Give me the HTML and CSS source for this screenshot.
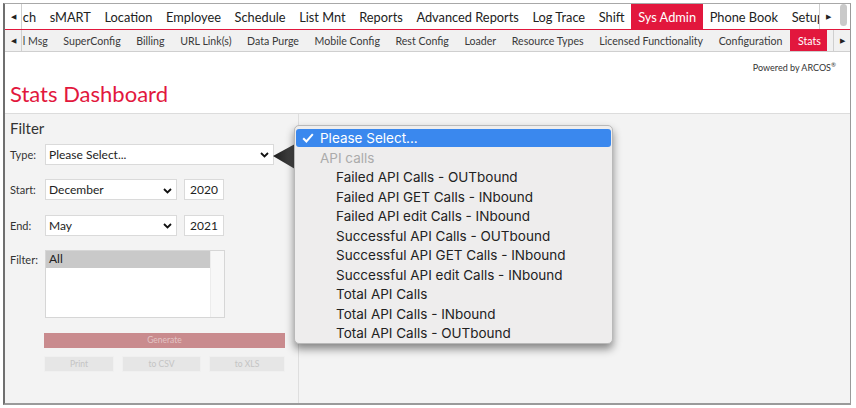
FILE: index.html
```html
<!DOCTYPE html>
<html lang="en">
<head>
    <meta charset="UTF-8">
    <title>Stats Dashboard</title>
    <link rel="stylesheet" href="styles.css">
</head>
<body>

<div class="frame">
    <div class="menu menu-main">
        <span class="arrow arrow-left">&#9664;</span>
        <div class="menu-scroll">
            <div class="menu-items main-items">
                <span class="item">ch</span>
                <span class="item">sMART</span>
                <span class="item">Location</span>
                <span class="item">Employee</span>
                <span class="item">Schedule</span>
                <span class="item">List Mnt</span>
                <span class="item">Reports</span>
                <span class="item">Advanced Reports</span>
                <span class="item">Log Trace</span>
                <span class="item">Shift</span>
                <span class="item active">Sys Admin</span>
                <span class="item">Phone Book</span>
                <span class="item">Setup</span>
            </div>
        </div>
        <span class="arrow arrow-right">&#9654;</span>
        <span class="thumb-track"><span class="thumb"></span></span>
    </div>

    <div class="menu menu-sub">
        <span class="arrow arrow-left">&#9664;</span>
        <div class="menu-scroll">
            <div class="menu-items sub-items">
                <span class="item">l Msg</span>
                <span class="item">SuperConfig</span>
                <span class="item">Billing</span>
                <span class="item">URL Link(s)</span>
                <span class="item">Data Purge</span>
                <span class="item">Mobile Config</span>
                <span class="item">Rest Config</span>
                <span class="item">Loader</span>
                <span class="item">Resource Types</span>
                <span class="item">Licensed Functionality</span>
                <span class="item">Configuration</span>
                <span class="item active">Stats</span>
            </div>
        </div>
        <span class="arrow arrow-right">&#9654;</span>
    </div>

    <div class="page-head">
        <div class="powered">Powered by ARCOS<sup>&reg;</sup></div>
        <h1>Stats Dashboard</h1>
    </div>

    <div class="content">
        <div class="filter-panel">
            <h2>Filter</h2>
            <div class="form-row">
                <label>Type:</label>
                <div class="select select-type">
                    <span>Please Select...</span>
                    <svg class="chev" width="9" height="6" viewBox="0 0 9 6"><path d="M1 1l3.5 3.5L8 1" fill="none" stroke="#111" stroke-width="1.8"/></svg>
                </div>
            </div>
            <div class="form-row">
                <label>Start:</label>
                <div class="select select-month">
                    <span>December</span>
                    <svg class="chev" width="9" height="6" viewBox="0 0 9 6"><path d="M1 1l3.5 3.5L8 1" fill="none" stroke="#111" stroke-width="1.8"/></svg>
                </div>
                <div class="year">2020</div>
            </div>
            <div class="form-row">
                <label>End:</label>
                <div class="select select-month">
                    <span>May</span>
                    <svg class="chev" width="9" height="6" viewBox="0 0 9 6"><path d="M1 1l3.5 3.5L8 1" fill="none" stroke="#111" stroke-width="1.8"/></svg>
                </div>
                <div class="year">2021</div>
            </div>
            <div class="form-row list-row">
                <label>Filter:</label>
                <div class="listbox">
                    <div class="list-options">
                        <div class="list-option selected">All</div>
                    </div>
                    <div class="list-scroll"></div>
                </div>
            </div>
            <div class="actions">
                <div class="btn btn-generate">Generate</div>
                <div class="btn-row">
                    <div class="btn btn-print">Print</div>
                    <div class="btn btn-csv">to CSV</div>
                    <div class="btn btn-xls">to XLS</div>
                </div>
            </div>
        </div>
        <div class="result-panel"></div>
    </div>

    <svg class="pointer" width="24" height="34" viewBox="0 0 24 34">
        <defs>
            <linearGradient id="pg" x1="0" y1="0" x2="1" y2="0">
                <stop offset="0" stop-color="#1c1c1c"/>
                <stop offset="1" stop-color="#4a4a4a"/>
            </linearGradient>
        </defs>
        <polygon points="1,17 23,5 23,30" fill="url(#pg)"/>
    </svg>

    <div class="popup">
        <div class="opt current">
            <svg class="check" width="12" height="10" viewBox="0 0 12 10"><path d="M1.2 5.2l3.2 3.3L10.8 1.2" fill="none" stroke="#fff" stroke-width="2"/></svg>
            Please Select...
        </div>
        <div class="opt group">API calls</div>
        <div class="opt sub">Failed API Calls - OUTbound</div>
        <div class="opt sub">Failed API GET Calls - INbound</div>
        <div class="opt sub">Failed API edit Calls - INbound</div>
        <div class="opt sub">Successful API Calls - OUTbound</div>
        <div class="opt sub">Successful API GET Calls - INbound</div>
        <div class="opt sub">Successful API edit Calls - INbound</div>
        <div class="opt sub">Total API Calls</div>
        <div class="opt sub">Total API Calls - INbound</div>
        <div class="opt sub">Total API Calls - OUTbound</div>
    </div>
</div>

</body>
</html>
```

FILE: styles.css
```css
body {
    margin: 0;
    padding: 3px 5px 3px 3px;
    background: #ffffff;
    font-family: "Lato", "Open Sans", sans-serif;
    color: #222;
}

.frame {
    position: relative;
    height: 399px;
    border-top: 1px solid #a8a8a8;
    border-left: 2px solid #6f6f6f;
    border-right: 1px solid #9a9a9a;
    border-bottom: 2px solid #9a9a9a;
    display: flex;
    flex-direction: column;
    overflow: hidden;
}

/* menus */
.menu {
    display: flex;
    align-items: stretch;
    flex: none;
}

.menu-main {
    height: 25px;
    border-bottom: 1px solid #e2173d;
    font-size: 12.8px;
    background: #fff;
}

.menu-sub {
    height: 21px;
    border-bottom: 1px solid #cfcfcf;
    font-size: 10.6px;
    background: #f1f1f1;
    color: #3a3a3a;
}

.arrow {
    flex: none;
    width: 16px;
    display: flex;
    align-items: center;
    justify-content: center;
    font-size: 7px;
    color: #222;
}

.arrow-left {
    border-right: 1px solid #cfcfcf;
}

.arrow-right {
    border-left: 1px solid #cfcfcf;
}

.menu-scroll {
    flex: 1;
    overflow: hidden;
}

.menu-items {
    display: flex;
    height: 100%;
    white-space: nowrap;
}

.main-items {
    margin-left: -6px;
}

.sub-items {
    margin-left: -7px;
}

.item {
    display: flex;
    align-items: center;
    padding: 0 6.8px;
}

.menu-sub .item {
    padding: 0 7.8px;
}

.item.active {
    background: #e2173d;
    color: #fff;
}

.menu-sub .arrow-right {
    width: 16px;
    margin-left: 6px;
}

.thumb-track {
    flex: none;
    width: 14px;
    display: flex;
    justify-content: center;
}

.thumb {
    width: 7px;
    height: 22px;
    border-radius: 4px;
    background: #c9c9c9;
}

/* header */
.page-head {
    flex: none;
    height: 61px;
    background: #fff;
    border-bottom: 1px solid #dcdcdc;
    padding: 0 14px 0 5px;
}

.powered {
    text-align: right;
    font-size: 9px;
    color: #333;
    margin-top: 9px;
}

.powered sup {
    font-size: 6px;
}

h1 {
    margin: 7px 0 0;
    font-size: 22px;
    font-weight: normal;
    color: #e2173d;
}

/* content */
.content {
    flex: 1;
    display: flex;
    background: #f3f3f3;
}

.filter-panel {
    width: 288px;
    border-right: 1px solid #dedede;
    padding-left: 5px;
    font-size: 11px;
    color: #333;
}

h2 {
    margin: 5px 0 6.5px;
    font-size: 15px;
    font-weight: normal;
    color: #333;
    line-height: 18px;
}

.form-row {
    display: flex;
    align-items: center;
    height: 21px;
    margin-bottom: 14.6px;
}

.form-row label {
    width: 35px;
    flex: none;
}

.select {
    height: 21px;
    box-sizing: border-box;
    background: #fff;
    border: 1px solid #dadada;
    display: flex;
    align-items: center;
    justify-content: space-between;
    padding: 0 4px 0 3px;
    font-size: 12px;
    color: #222;
}

.select-type {
    width: 229px;
}

.select-month {
    width: 132px;
}

.chev {
    margin-top: 2px;
}

.year {
    width: 40px;
    height: 21px;
    box-sizing: border-box;
    margin-left: 7px;
    background: #fff;
    border: 1px solid #dadada;
    text-align: center;
    line-height: 19px;
    font-size: 12px;
    color: #222;
}

.list-row {
    align-items: flex-start;
    height: 68px;
    margin-bottom: 14.5px;
}

.list-row label {
    padding-top: 3px;
}

.listbox {
    width: 180px;
    height: 68px;
    box-sizing: border-box;
    border: 1px solid #d6d6d6;
    background: #fff;
    display: flex;
}

.list-options {
    flex: 1;
}

.list-option {
    height: 17px;
    line-height: 16px;
    padding-left: 3px;
    font-size: 12px;
    color: #222;
}

.list-option.selected {
    background: #c9c9c9;
}

.list-scroll {
    width: 13px;
    background: #f7f7f7;
    border-left: 1px solid #ececec;
}

.actions {
    margin-left: 34px;
    width: 241px;
}

.btn {
    height: 15px;
    line-height: 15px;
    text-align: center;
    font-size: 8.5px;
}

.btn-generate {
    background: #c98b8e;
    color: #e3c4c5;
}

.btn-row {
    display: flex;
    gap: 8px;
    margin-top: 8.5px;
}

.btn-row .btn {
    background: #e6e6e6;
    color: #c4c4c4;
    border: 1px solid #f0f0f0;
    box-sizing: border-box;
    height: 16px;
    line-height: 14px;
}

.btn-print { width: 70px; }
.btn-csv { width: 79px; }
.btn-xls { width: 76px; }

.result-panel {
    flex: 1;
}

/* open select list */
.pointer {
    position: absolute;
    left: 267px;
    top: 135px;
}

.popup {
    position: absolute;
    left: 289px;
    top: 121px;
    width: 317px;
    height: 214px;
    padding-top: 3px;
    background: #eeeded;
    border: 1px solid #b9b9b9;
    border-radius: 5px;
    box-shadow: 0 5px 9px rgba(0, 0, 0, 0.45);
    font-family: "Inter", "Liberation Sans", sans-serif;
    font-size: 13.5px;
    color: #222;
}

.opt {
    height: 19.5px;
    line-height: 19.5px;
    padding-left: 25px;
    white-space: nowrap;
}

.opt.current {
    position: relative;
    margin: 0 1px 1.5px;
    height: 18px;
    line-height: 18px;
    padding-left: 24px;
    background: #3a88ee;
    border-radius: 3px;
    color: #fff;
}

.check {
    position: absolute;
    left: 6px;
    top: 4px;
}

.opt.group {
    color: #ababab;
}

.opt.sub {
    padding-left: 41px;
}
```
